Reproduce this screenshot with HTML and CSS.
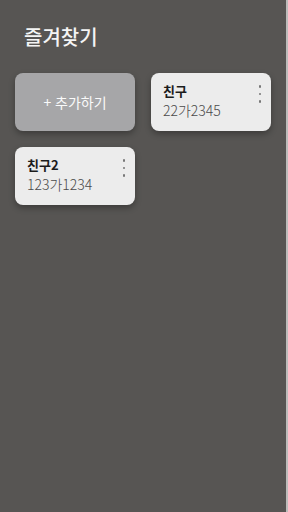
FILE: index.html
```html
<!DOCTYPE html>
<html lang="ko">
<head>
    <meta charset="UTF-8">
    <meta name="viewport" content="width=device-width, initial-scale=1.0">
    <title>즐겨찾기</title>
    <link rel="stylesheet" href="styles.css">
</head>
<body>
    <div class="page">
        <h1 class="title">즐겨찾기</h1>
        <div class="fav-grid">
            <button class="card add-card">+ 추가하기</button>
            <div class="card friend-card">
                <div class="friend-info">
                    <div class="friend-name">친구</div>
                    <div class="friend-plate">22가2345</div>
                </div>
                <span class="more-btn"><i></i><i></i><i></i></span>
            </div>
            <div class="card friend-card">
                <div class="friend-info">
                    <div class="friend-name">친구2</div>
                    <div class="friend-plate">123가1234</div>
                </div>
                <span class="more-btn"><i></i><i></i><i></i></span>
            </div>
        </div>
    </div>
</body>
</html>
```

FILE: styles.css
```css
* {
    box-sizing: border-box;
}

html, body {
    margin: 0;
    height: 100%;
}

body {
    font-family: 'Noto Sans CJK KR', 'Noto Sans', sans-serif;
    background-color: #575553;
}

.page {
    min-height: 100%;
    padding: 22px 16px 0 15px;
    border-right: 2px solid #bdbcbb;
}

.title {
    margin: 0 0 21px 9px;
    color: #f4f4f4;
    font-size: 20px;
    font-weight: 500;
    line-height: 30px;
}

.fav-grid {
    display: grid;
    grid-template-columns: 120px 120px;
    column-gap: 16px;
    row-gap: 16px;
}

.card {
    height: 58px;
    border-radius: 8px;
    box-shadow: 0 3px 6px rgba(0, 0, 0, 0.3);
}

.add-card {
    border: none;
    background-color: #a6a6a8;
    color: #fafafa;
    font-family: inherit;
    font-size: 14px;
    font-weight: 400;
    padding: 0;
    cursor: pointer;
}

.friend-card {
    background-color: #ececec;
    display: flex;
    justify-content: space-between;
    padding: 8px 8px 0 12px;
}

.friend-name {
    font-size: 13px;
    font-weight: 700;
    color: #1c1c1c;
    line-height: 20px;
}

.friend-plate {
    font-size: 14px;
    font-weight: 300;
    color: #4a4a4a;
    line-height: 18px;
}

.more-btn {
    display: flex;
    flex-direction: column;
    gap: 5px;
    padding: 4px 2px 0 0;
}

.more-btn i {
    width: 2.5px;
    height: 2.5px;
    border-radius: 50%;
    background-color: #777;
}
```
